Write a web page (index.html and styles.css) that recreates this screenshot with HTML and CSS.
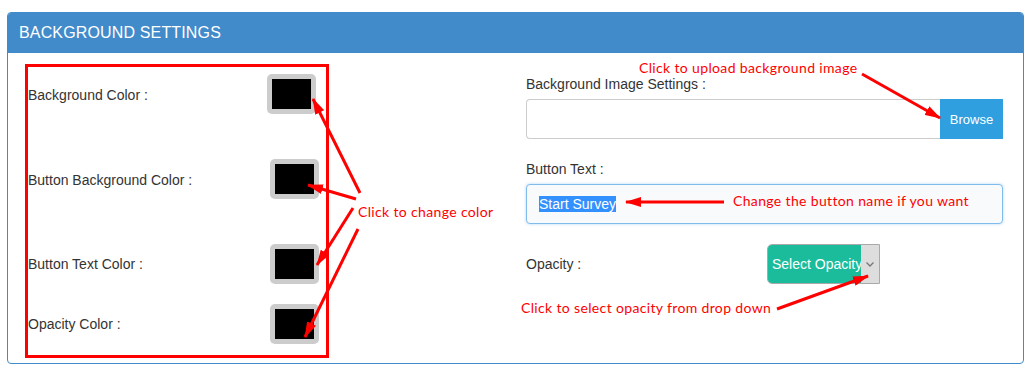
FILE: index.html
```html
<!DOCTYPE html>
<html lang="en">
<head>
    <meta charset="UTF-8">
    <meta name="viewport" content="width=device-width, initial-scale=1.0">
    <title>Background Settings</title>
    <link rel="stylesheet" href="styles.css">
</head>
<body>
    <div class="panel">
        <div class="panel-heading">BACKGROUND SETTINGS</div>
        <div class="panel-body">
            <div class="color-settings">
                <div class="color-row row-first">
                    <span class="label">Background Color :</span>
                    <span class="swatch"><span></span></span>
                </div>
                <div class="color-row row-second">
                    <span class="label">Button Background Color :</span>
                    <span class="swatch"><span></span></span>
                </div>
                <div class="color-row">
                    <span class="label">Button Text Color :</span>
                    <span class="swatch"><span></span></span>
                </div>
                <div class="color-row row-last">
                    <span class="label">Opacity Color :</span>
                    <span class="swatch"><span></span></span>
                </div>
            </div>

            <div class="image-settings">
                <div class="field-label">Background Image Settings :</div>
                <div class="file-group">
                    <div class="file-input"></div>
                    <div class="browse">Browse</div>
                </div>

                <div class="field-label">Button Text :</div>
                <div class="text-input"><span class="selected">Start Survey</span></div>

                <div class="opacity-row">
                    <span class="opacity-label">Opacity :</span>
                    <div class="select">
                        <span class="select-text">Select Opacity</span>
                        <span class="select-arrow">
                            <svg width="8" height="5" viewBox="0 0 8 5"><path d="M0.5 0.5 L4 4 L7.5 0.5" fill="none" stroke="#777" stroke-width="1.3"/></svg>
                        </span>
                    </div>
                </div>
            </div>
        </div>
    </div>

    <!-- annotations -->
    <svg class="arrows" width="1035" height="376">
        <defs>
            <marker id="head" markerUnits="userSpaceOnUse" markerWidth="16" markerHeight="10" refX="15" refY="5" orient="auto">
                <path d="M0 0 L16 5 L0 10 Z" fill="#ff0000"/>
            </marker>
        </defs>
        <g stroke="#ff0000" stroke-width="3" marker-end="url(#head)">
            <line x1="360" y1="193" x2="313" y2="99"/>
            <line x1="356" y1="199" x2="308" y2="185"/>
            <line x1="353" y1="208" x2="317" y2="265"/>
            <line x1="358" y1="229" x2="305" y2="337"/>
            <line x1="862" y1="74" x2="940" y2="118"/>
            <line x1="724" y1="202" x2="626" y2="202"/>
            <line x1="777" y1="309" x2="868" y2="276"/>
        </g>
    </svg>
    <div class="note note-upload">Click to upload background image</div>
    <div class="note note-color">Click to change color</div>
    <div class="note note-name">Change the button name if you want</div>
    <div class="note note-opacity">Click to select opacity from drop down</div>
</body>
</html>
```

FILE: styles.css
```css
body {
    margin: 0;
    font-family: "Liberation Sans", Arial, sans-serif;
    background-color: #ffffff;
    color: #333333;
    position: relative;
    width: 1035px;
    height: 376px;
    overflow: hidden;
}

.panel {
    margin: 12px 0 0 7px;
    width: 1017px;
    box-sizing: border-box;
    border: 1px solid #428bca;
    border-radius: 4px;
    overflow: hidden;
}

.panel-heading {
    background-color: #428bca;
    color: #ffffff;
    font-size: 16px;
    letter-spacing: 0.15px;
    height: 40px;
    line-height: 40px;
    padding-left: 11px;
}

.panel-body {
    display: flex;
    gap: 197px;
    padding: 11px 20px 5px 17px;
}

.color-settings {
    width: 304px;
    height: 294px;
    box-sizing: border-box;
    border: 3px solid #ff0000;
}

.color-row {
    display: flex;
    align-items: center;
    margin-top: 45px;
    font-size: 14px;
}

.color-row.row-first {
    margin-top: 7px;
}

.color-row.row-last {
    margin-top: 20px;
}

.label {
    width: 242px;
}

.row-first .label,
.row-second .label {
    padding-top: 2px;
}

.swatch {
    width: 49px;
    height: 40px;
    box-sizing: border-box;
    padding: 5px;
    background-color: #cccccc;
    border-radius: 5px;
}

.row-first .swatch {
    margin-left: -3px;
}

.swatch span {
    display: block;
    width: 100%;
    height: 100%;
    background-color: #000000;
}

.image-settings {
    width: 477px;
    font-size: 14px;
}

.field-label {
    line-height: 20px;
    margin-top: 10px;
    margin-bottom: 5px;
}

.file-group + .field-label {
    margin-top: 20px;
}

.file-group {
    display: flex;
    height: 40px;
}

.file-input {
    flex: 1;
    border: 1px solid #cccccc;
    border-right: none;
    border-radius: 4px 0 0 4px;
}

.browse {
    width: 63px;
    background-color: #2f9fdf;
    color: #ffffff;
    font-size: 13px;
    display: flex;
    align-items: center;
    justify-content: center;
}

.text-input {
    height: 40px;
    box-sizing: border-box;
    border: 1px solid #7fbcec;
    border-radius: 4px;
    background-color: #f9fafb;
    box-shadow: 0 0 3px rgba(102, 175, 233, 0.5);
    padding-left: 12px;
    display: flex;
    align-items: center;
}

.selected {
    background-color: #3390ff;
    color: #ffffff;
    line-height: 16px;
}

.opacity-row {
    display: flex;
    align-items: center;
    margin-top: 20px;
}

.opacity-label {
    width: 241px;
}

.select {
    display: flex;
    width: 113px;
    height: 40px;
    box-sizing: border-box;
    border: 1px solid #a9a9a9;
    border-radius: 5px 0 0 5px;
    overflow: hidden;
}

.select-text {
    flex: 1;
    background-color: #1abc9c;
    color: #ffffff;
    padding-left: 4px;
    white-space: nowrap;
    overflow: hidden;
    line-height: 38px;
}

.select-arrow {
    width: 18px;
    background-color: #dddddd;
    display: flex;
    align-items: center;
    justify-content: center;
}

.arrows {
    position: absolute;
    top: 0;
    left: 0;
}

.note {
    position: absolute;
    font-family: Lato, "Open Sans", sans-serif;
    font-size: 14px;
    letter-spacing: 0.35px;
    line-height: 18px;
    color: #ff0000;
    white-space: nowrap;
}

.note-upload {
    left: 639px;
    top: 59px;
}

.note-color {
    left: 358px;
    top: 203px;
}

.note-name {
    left: 733px;
    top: 192px;
}

.note-opacity {
    left: 521px;
    top: 299px;
}
```
